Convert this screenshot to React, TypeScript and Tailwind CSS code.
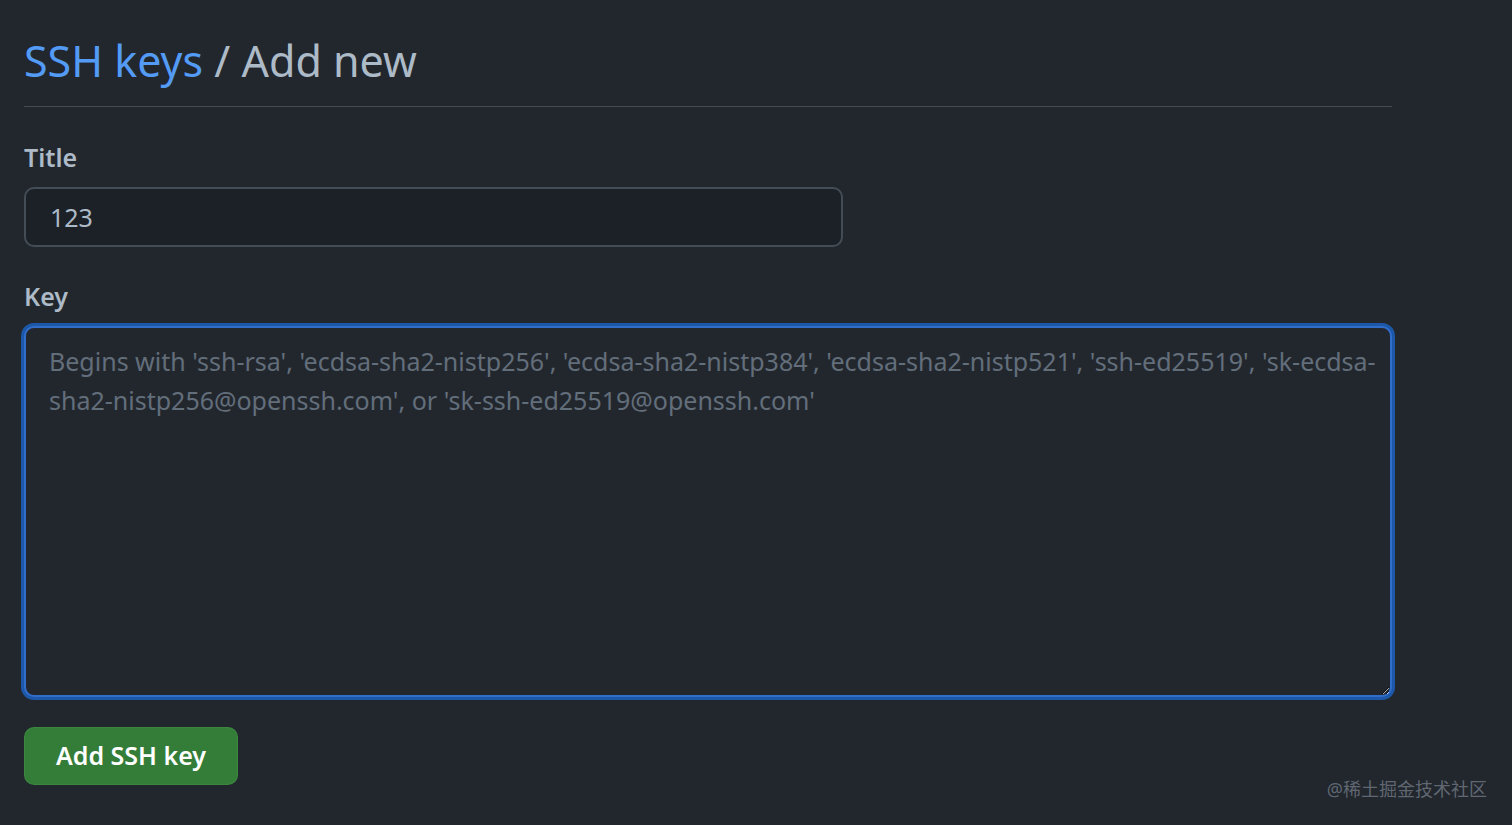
export default function App() {
  return (
    <div
      className="min-h-screen w-full bg-[#22272e] px-[24px] pt-[28px] text-[#adbac7]"
      style={{ fontFamily: '"Noto Sans", "Noto Sans CJK SC", sans-serif' }}
    >
      <div className="w-[1368px]">
        <h2 className="border-b border-[#444c56] pb-[12px] text-[43px] font-normal leading-[66px]">
          <a className="text-[#539bf5]">SSH keys</a>
          <span> / Add new</span>
        </h2>

        <form className="mt-[32px] flex flex-col">
          <label className="text-[25px] font-semibold leading-[36px] text-[#adbac7]">Title</label>
          <input
            defaultValue="123"
            className="mt-[12px] h-[60px] w-[819px] rounded-[10px] border-2 border-[#444c56] bg-[#1c2128] px-[24px] text-[25px] text-[#adbac7] outline-none"
          />

          <label className="mt-[31px] text-[25px] font-semibold leading-[36px] text-[#adbac7]">Key</label>
          <textarea
            placeholder="Begins with 'ssh-rsa', 'ecdsa-sha2-nistp256', 'ecdsa-sha2-nistp384', 'ecdsa-sha2-nistp521', 'ssh-ed25519', 'sk-ecdsa-sha2-nistp256@openssh.com', or 'sk-ssh-ed25519@openssh.com'"
            className="mt-[12px] h-[371px] w-[1368px] rounded-[10px] border-2 border-[#316dca] bg-[#22272e] py-[14px] pl-[23px] pr-[10px] text-[25px] leading-[39px] text-[#adbac7] placeholder:text-[#636e7b] outline-none ring-[3px] ring-[#1d58a8]"
          />

          <div className="mt-[30px]">
            <button
              type="button"
              className="h-[58px] w-[214px] rounded-[10px] border border-[#46954a]/40 bg-[#347d39] text-[25px] font-semibold text-white"
            >
              Add SSH key
            </button>
          </div>
        </form>
      </div>

      <div className="absolute bottom-[22px] right-[25px] text-[18px] text-[#7d8590]/70">@稀土掘金技术社区</div>
    </div>
  );
}
